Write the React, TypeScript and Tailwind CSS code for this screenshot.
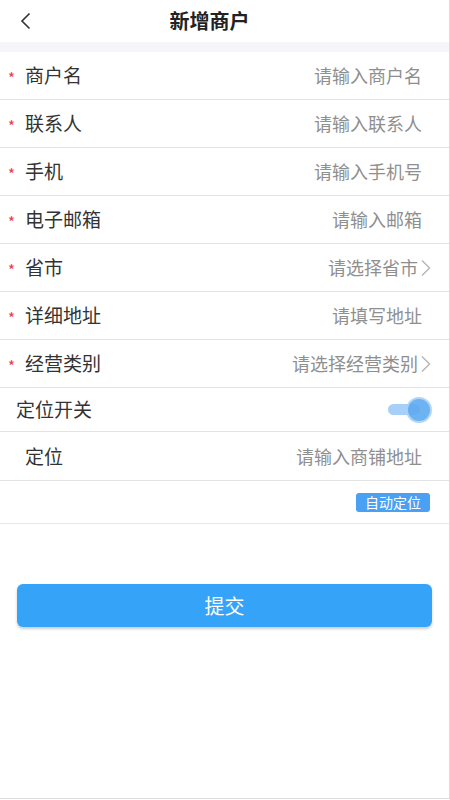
import React from "react";

const FONT = { fontFamily: '"Noto Sans CJK SC", "Noto Sans", sans-serif' };

function Chevron() {
  return (
    <svg width="12" height="18" viewBox="0 0 12 18" className="ml-[2px]">
      <path d="M2 1.5 L9.5 9 L2 16.5" fill="none" stroke="#b5b5b5" strokeWidth="1.4" />
    </svg>
  );
}

function Row({ label, ph, arrow }: { label: string; ph: string; arrow?: boolean }) {
  return (
    <div className="flex h-[48px] items-center border-b border-[#e3e3e3] pr-[17px]">
      <span className="w-[25px] pl-[8px] text-[15px] leading-none text-[#e83b3b] pt-[4px]">*</span>
      <span className="text-[19px] text-[#333]">{label}</span>
      <div className="ml-auto flex items-center">
        <span className={`text-[18px] text-[#8f8f8f] ${arrow ? "" : "mr-[10px]"}`}>{ph}</span>
        {arrow && <Chevron />}
      </div>
    </div>
  );
}

export default function App() {
  return (
    <div style={FONT} className="w-[450px] h-[799px] bg-white border-r border-b border-[#dcdcdc] flex flex-col">
      <div className="relative h-[42px] flex items-center justify-center">
        <svg width="14" height="18" viewBox="0 0 14 18" className="absolute left-[19px] top-[12px]">
          <path d="M10.5 1.5 L3 9 L10.5 16.5" fill="none" stroke="#333" strokeWidth="1.6" />
        </svg>
        <span className="text-[20px] font-bold text-[#222] ml-[-30px]">新增商户</span>
      </div>
      <div className="h-[10px] bg-[#f6f6fa]" />
      <Row label="商户名" ph="请输入商户名" />
      <Row label="联系人" ph="请输入联系人" />
      <Row label="手机" ph="请输入手机号" />
      <Row label="电子邮箱" ph="请输入邮箱" />
      <Row label="省市" ph="请选择省市" arrow />
      <Row label="详细地址" ph="请填写地址" />
      <Row label="经营类别" ph="请选择经营类别" arrow />
      <div className="flex h-[44px] items-center border-b border-[#e3e3e3] pl-[16px] pr-[19px]">
        <span className="text-[19px] text-[#333]">定位开关</span>
        <div className="ml-auto relative w-[42px] h-[22px] flex items-center">
          <div className="w-[32px] h-[11px] rounded-full bg-[#a6d0f7]" />
          <div className="absolute right-0 top-0 w-[22px] h-[22px] rounded-full bg-[#5eaaf0] opacity-90 ring-2 ring-[#a9d2f8]" />
        </div>
      </div>
      <div className="flex h-[49px] items-center border-b border-[#e3e3e3] pl-[25px] pr-[27px]">
        <span className="text-[19px] text-[#333]">定位</span>
        <span className="ml-auto text-[18px] text-[#8f8f8f]">请输入商铺地址</span>
      </div>
      <div className="flex h-[43px] items-center justify-end border-b border-[#e8e8e8] pr-[19px]">
        <span className="h-[19px] px-[9px] rounded-[3px] bg-[#4aa0f3] text-white text-[14px] leading-[19px]">自动定位</span>
      </div>
      <div className="px-[17px] mt-[60px]">
        <button className="w-full h-[43px] rounded-[6px] bg-[#35a3f8] text-white text-[20px] shadow-[0_2px_3px_rgba(0,0,0,0.2)]">提交</button>
      </div>
    </div>
  );
}
